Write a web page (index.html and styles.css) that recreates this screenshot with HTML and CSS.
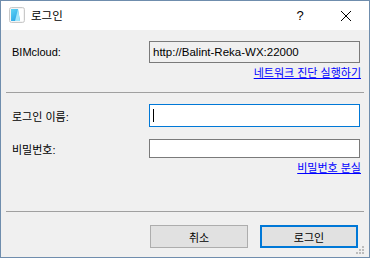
FILE: index.html
```html
<!DOCTYPE html>
<html lang="ko">
<head>
  <meta charset="UTF-8">
  <title>로그인</title>
  <link rel="stylesheet" href="styles.css">
</head>
<body>
  <div class="dialog">
    <!-- Title bar -->
    <div class="titlebar">
      <svg class="app-icon" width="16" height="16" viewBox="0 0 16 16">
        <defs>
          <linearGradient id="ac" x1="0" y1="0" x2="1" y2="1">
            <stop offset="0" stop-color="#5fd6f5"/>
            <stop offset="1" stop-color="#1590e0"/>
          </linearGradient>
        </defs>
        <rect x="0.5" y="0.5" width="15" height="15" rx="2" fill="#f4f4f4" stroke="#c9c9c9"/>
        <rect x="2" y="2" width="12" height="12" fill="url(#ac)"/>
        <polygon points="9,2 14,2 14,14 11,14" fill="#ffffff"/>
        <polygon points="9,2 11,14 6,14" fill="#9fe6fb"/>
      </svg>
      <span class="title">로그인</span>
      <span class="caption-btn">?</span>
      <span class="caption-btn">
        <svg width="10" height="10" viewBox="0 0 10 10">
          <path d="M0 0L10 10M10 0L0 10" stroke="#000" stroke-width="1"/>
        </svg>
      </span>
    </div>

    <!-- Body -->
    <div class="body">
      <div class="group">
        <div class="row">
          <label>BIMcloud:</label>
          <div class="field readonly">http://Balint-Reka-WX:22000</div>
        </div>
        <a class="link" href="#">네트워크 진단 실행하기</a>
      </div>

      <hr class="sep">

      <div class="group">
        <div class="row">
          <label>로그인 이름:</label>
          <div class="field focused"><span class="caret"></span></div>
        </div>
        <div class="row second">
          <label>비밀번호:</label>
          <div class="field short"></div>
        </div>
        <a class="link" href="#">비밀번호 분실</a>
      </div>

      <hr class="sep lower">

      <div class="buttons">
        <button class="btn">취소</button>
        <button class="btn default">로그인</button>
      </div>
    </div>

    <svg class="grip" width="9" height="9" viewBox="0 0 9 9">
      <rect x="6" y="0" width="2" height="2" fill="#bcbcbc"/>
      <rect x="3" y="3" width="2" height="2" fill="#bcbcbc"/>
      <rect x="6" y="3" width="2" height="2" fill="#bcbcbc"/>
      <rect x="0" y="6" width="2" height="2" fill="#bcbcbc"/>
      <rect x="3" y="6" width="2" height="2" fill="#bcbcbc"/>
      <rect x="6" y="6" width="2" height="2" fill="#bcbcbc"/>
    </svg>
  </div>
</body>
</html>
```

FILE: styles.css
```css
/* Reset */
*, *::before, *::after {
  margin: 0;
  padding: 0;
  box-sizing: border-box;
}
body {
  font-family: "Liberation Sans", "Noto Sans CJK KR", sans-serif;
  font-size: 11px;
  color: #000;
  background: #f0f0f0;
}
/* Dialog frame */
.dialog {
  position: relative;
  width: 370px;
  height: 258px;
  border: 1px solid #6f8dad;
  background: #f0f0f0;
  display: flex;
  flex-direction: column;
}
/* Title bar */
.titlebar {
  height: 29px;
  background: #fff;
  display: flex;
  align-items: center;
}
.app-icon {
  margin-left: 8px;
  margin-top: -1px;
}
.title {
  margin-left: 6px;
  flex: 1;
  font-size: 11.5px;
  margin-top: -1px;
}
.caption-btn {
  width: 46px;
  height: 29px;
  display: flex;
  align-items: center;
  justify-content: center;
  font-size: 13px;
}
/* Body */
.body {
  padding: 11px 5px 0 5px;
}
.group {
  padding: 0 4px 0 6px;
  display: flex;
  flex-direction: column;
}
.row {
  display: grid;
  grid-template-columns: 137px 1fr;
  align-items: center;
}
.row.second {
  margin-top: 12px;
}
.field {
  height: 22px;
  border: 1px solid #7a7a7a;
  background: #fff;
  padding: 0 3px;
  line-height: 20px;
  font-size: 11.5px;
  white-space: nowrap;
  overflow: hidden;
}
.field.readonly {
  background: #f0f0f0;
}
.field.focused {
  height: 23px;
  border-color: #0078d7;
  display: flex;
  align-items: center;
}
.field.short {
  height: 19px;
}
.caret {
  width: 1px;
  height: 13px;
  background: #000;
}
.link {
  align-self: flex-end;
  margin-top: 3px;
  margin-right: -1px;
  line-height: 14px;
  color: #0000ff;
  text-decoration: underline;
}
/* Separators */
.sep {
  border: none;
  border-top: 1px solid #a0a0a0;
  margin: 12px 0 11px;
}
.sep.lower {
  margin: 36px 0 13px;
}
/* Buttons */
.buttons {
  display: flex;
  justify-content: flex-end;
  gap: 12px;
  padding-right: 6px;
}
.btn {
  width: 98px;
  height: 23px;
  background: #e1e1e1;
  border: 1px solid #adadad;
  font-family: inherit;
  font-size: 11px;
  color: #000;
}
.btn.default {
  border: 2px solid #0078d7;
}
.grip {
  position: absolute;
  right: 4px;
  bottom: 2px;
}
```
